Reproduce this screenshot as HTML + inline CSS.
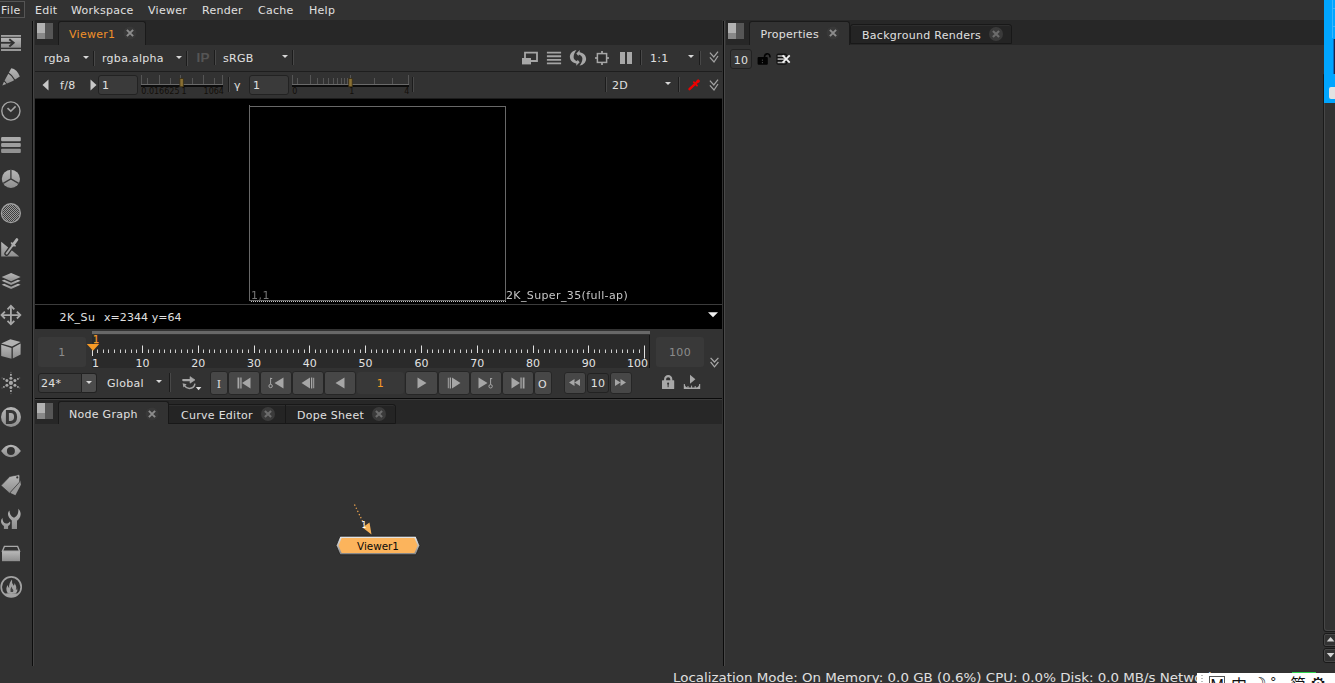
<!DOCTYPE html>
<html>
<head>
<meta charset="utf-8">
<title>Nuke</title>
<style>
html,body{margin:0;padding:0;background:#323232;}
body{width:1335px;height:683px;overflow:hidden;position:relative;font-family:"DejaVu Sans","Liberation Sans",sans-serif;font-size:11px;letter-spacing:0.28px;color:#e0e0e0;}
#app{position:absolute;left:0;top:0;width:1335px;height:683px;overflow:hidden;background:#323232;}
.abs{position:absolute;}
.t{position:absolute;white-space:nowrap;line-height:14px;color:#e0e0e0;margin-top:1px;}
.box{position:absolute;box-sizing:border-box;}
.vsep{position:absolute;width:1px;background:#1c1c1c;box-shadow:1px 0 0 #484848;}
.field{position:absolute;box-sizing:border-box;background:#3a3a3a;border:1px solid #222;border-radius:3px;}
.btn{position:absolute;box-sizing:border-box;background:#474747;border:1px solid #262626;border-radius:3px;}
.tabbar{position:absolute;background:#272727;}
.tab{position:absolute;box-sizing:border-box;background:#242424;border:1px solid #181818;border-radius:3px 3px 0 0;box-shadow:inset 0 1px 0 #2e2e2e;}
.tab.on{background:#323232;border-color:#1a1a1a;border-bottom:none;box-shadow:none;}
svg{position:absolute;overflow:visible;}
svg text{letter-spacing:0;}
.dd{position:absolute;width:0;height:0;border-left:3px solid transparent;border-right:3px solid transparent;border-top:3.5px solid #d8d8d8;}
</style>
</head>
<body>
<div id="app">

<!-- MENU BAR -->
<div class="box" style="left:0;top:0;width:1335px;height:20px;background:#323232;"></div>
<div class="box" style="left:-1px;top:1px;width:26px;height:17px;border:1px solid #555;background:#2e2e2e;"></div>
<div class="t" style="left:1px;top:3px;">File</div>
<div class="t" style="left:35px;top:3px;">Edit</div>
<div class="t" style="left:71px;top:3px;">Workspace</div>
<div class="t" style="left:148px;top:3px;">Viewer</div>
<div class="t" style="left:202px;top:3px;">Render</div>
<div class="t" style="left:258px;top:3px;">Cache</div>
<div class="t" style="left:309px;top:3px;">Help</div>

<!-- LEFT TOOLBAR -->
<div class="box" id="ltb" style="left:0;top:20px;width:32px;height:646px;background:#323232;"></div>
<div class="box" style="left:32px;top:21px;width:1px;height:645px;background:#0c0c0c;"></div><div class="box" style="left:33px;top:21px;width:1px;height:645px;background:#444;"></div>
<svg style="left:0;top:20px;" width="32" height="646" viewBox="0 20 32 646">
<defs>
<linearGradient id="ig" x1="0" y1="0" x2="0" y2="1"><stop offset="0" stop-color="#b8b8b8"/><stop offset="1" stop-color="#8e8e8e"/></linearGradient>
<pattern id="dots" width="2" height="2" patternUnits="userSpaceOnUse"><rect width="2" height="2" fill="#9a9a9a"/><rect width="1" height="1" fill="#3e3e3e"/><rect x="1" y="1" width="1" height="1" fill="#3e3e3e"/></pattern>
</defs>
<!-- 1 import -->
<g fill="url(#ig)">
<rect x="1" y="35.1" width="20" height="1.8"/>
<rect x="1" y="37.8" width="20" height="9.9"/>
<rect x="1" y="49.2" width="20" height="1.8"/>
</g>
<path d="M0.9 42.8 H12.8" stroke="#323232" stroke-width="1.8" fill="none"/>
<path d="M9.3 39.2 L13.6 42.8 L9.3 46.4" stroke="#323232" stroke-width="2" fill="none"/>
<!-- 2 pencil -->
<g fill="url(#ig)">
<path d="M2.3 85.6 L4 81.7 L6.3 84 Z"/>
<path d="M4.6 80.6 L11.3 68.2 Q17 68.8 19.8 76.6 Q13 81.6 7 83.6 Z"/>
</g>
<path d="M7.8 72.4 Q12.2 75 14.9 80.2" stroke="#323232" stroke-width="1.2" fill="none"/>
<!-- 3 clock -->
<circle cx="10.9" cy="111" r="9.1" fill="none" stroke="#a6a6a6" stroke-width="1.4"/>
<path d="M7.5 108.2 L10.8 111.2 L15.6 106.4" fill="none" stroke="#a6a6a6" stroke-width="1.6"/>
<!-- 4 bars -->
<g><rect x="1.1" y="137" width="19.7" height="4.2" rx="1" fill="#aaa"/><rect x="1.1" y="142.9" width="19.7" height="4.2" rx="1" fill="#9e9e9e"/><rect x="1.1" y="148.8" width="19.7" height="4.2" rx="1" fill="#929292"/></g>
<!-- 5 pie -->
<circle cx="10.9" cy="178.9" r="9.1" fill="url(#ig)"/>
<path d="M10.9 169.5 V178.9 L3.2 183.4 M10.9 178.9 L18.6 183.4" stroke="#3a3a3a" stroke-width="1.3" fill="none"/>
<!-- 6 dotted circle -->
<circle cx="10.9" cy="213.2" r="8.6" fill="url(#dots)"/>
<circle cx="10.9" cy="213.2" r="9.4" fill="none" stroke="#a2a2a2" stroke-width="1.4"/>
<!-- 7 triangle + dropper -->
<path d="M1.2 241.8 L1.2 256.4 L19.2 256.4 Z" fill="url(#ig)"/>
<path d="M6.6 253.6 L12.6 245.4 L17 239.4" stroke="#323232" stroke-width="4.6" stroke-linecap="round" fill="none"/>
<path d="M11 242.6 L15.6 246.2" stroke="#323232" stroke-width="3.6" stroke-linecap="round" fill="none"/>
<path d="M6.6 253.6 L12.8 245.2" stroke="#a6a6a6" stroke-width="1.9" stroke-linecap="round" fill="none"/>
<path d="M12.8 245.2 L16.9 239.6" stroke="#b0b0b0" stroke-width="2.8" stroke-linecap="round" fill="none"/>
<path d="M11.5 243 L15.1 245.8" stroke="#ababab" stroke-width="1.6" stroke-linecap="round" fill="none"/>
<!-- 8 layers -->
<g fill="url(#ig)" transform="translate(-0.4 0.5)">
<path d="M11.5 272.4 L21 276.6 L11.5 280.8 L2 276.6 Z"/>
<path d="M2 280.3 L4.6 279.2 L11.5 282.3 L18.4 279.2 L21 280.3 L11.5 284.6 Z"/>
<path d="M2 284.3 L4.6 283.2 L11.5 286.3 L18.4 283.2 L21 284.3 L11.5 288.6 Z"/>
</g>
<!-- 9 move -->
<g stroke="#a8a8a8" stroke-width="1.8" fill="none">
<path d="M10.9 306.4 V323.8 M2 315.1 H19.8"/>
<path d="M7.5 309.4 L10.9 305.9 L14.3 309.4 M7.5 320.8 L10.9 324.3 L14.3 320.8 M4.9 311.7 L1.5 315.1 L4.9 318.5 M16.9 311.7 L20.3 315.1 L16.9 318.5"/>
</g>
<!-- 10 cube -->
<g>
<path d="M1.2 343.5 L10.4 339.2 L20.6 342.1 L12 346.6 Z" fill="#b2b2b2"/>
<path d="M1.2 344.7 L11.5 348 V358.8 L1.2 356 Z" fill="url(#ig)"/>
<path d="M12.8 347.8 L20.6 343.4 V354.4 L12.8 358.6 Z" fill="url(#ig)"/>
</g>
<!-- 11 particles -->
<g fill="#a8a8a8" transform="translate(-0.1 0.9)">
<circle cx="11" cy="382" r="2.1"/>
<circle cx="11" cy="377.4" r="1.5"/><circle cx="11" cy="386.6" r="1.5"/>
<circle cx="7" cy="379.7" r="1.5"/><circle cx="15" cy="379.7" r="1.5"/>
<circle cx="7" cy="384.3" r="1.5"/><circle cx="15" cy="384.3" r="1.5"/>
<rect x="10.1" y="373" width="1.8" height="1.8"/><rect x="10.1" y="389.2" width="1.8" height="1.8"/>
<circle cx="4" cy="378" r="0.95"/><circle cx="18" cy="378" r="0.95"/>
<circle cx="4" cy="386" r="0.95"/><circle cx="18" cy="386" r="0.95"/>
<g opacity="0.45"><rect x="10.4" y="371" width="1.2" height="1"/><rect x="10.4" y="392.2" width="1.2" height="1"/>
<circle cx="2.2" cy="377" r="0.6"/><circle cx="19.8" cy="377" r="0.6"/>
<circle cx="2.2" cy="387" r="0.6"/><circle cx="19.8" cy="387" r="0.6"/></g>
</g>
<!-- 12 D -->
<circle cx="11" cy="417" r="10" fill="url(#ig)"/>
<path d="M7.4 411.6 H11 Q15.6 412 15.6 417 Q15.6 422 11 422.4 H7.4 Z" fill="none" stroke="#363636" stroke-width="3" stroke-linejoin="miter"/>
<!-- 13 eye -->
<path d="M1.1 451 Q5.5 444.8 10.9 444.8 Q16.3 444.8 20.9 451 Q16.3 457.2 10.9 457.2 Q5.5 457.2 1.1 451 Z M10.9 447 A4 4 0 1 0 10.9 455 A4 4 0 1 0 10.9 447 Z" fill="url(#ig)" fill-rule="evenodd"/>
<!-- 14 tags -->
<path d="M10 492.8 L20.3 480.5 L20.9 484.8 L15.4 495.2 Z" fill="#9a9a9a"/>
<path d="M1 485.6 L9.8 476.4 L18.6 474.8 Q19.8 474.8 19.8 476 L19.6 482 L9.6 493.2 Z" fill="url(#ig)" stroke="#323232" stroke-width="0.7"/>
<circle cx="17.3" cy="477.4" r="1.1" fill="#323232"/>
<!-- 15 wrenches -->
<g fill="url(#ig)">
<path d="M9.4 510.6 C7.2 513 7.4 517 11.8 520.4 V529 H17 V520.8 C21.4 517.4 21.8 512.4 18.4 508.8 C18.6 513 17.6 516 14 517.8 C10.6 516.4 9.6 514 9.4 510.6 Z"/>
<path d="M2.4 518 C0.2 520.6 0.8 524 3.9 526 V529 H8.1 V526 C10 524.8 10.8 523.2 10 521.4 C9.2 522.6 8 523.4 6 523.6 C3.6 523 2.4 521 2.4 518 Z"/>
</g>
<!-- 16 box -->
<g>
<path d="M4.4 546.4 H17.6 L19.6 551.2 H2.4 Z" fill="none" stroke="#a8a8a8" stroke-width="1.3"/>
<rect x="2" y="551.2" width="18" height="10" fill="url(#ig)"/>
</g>
<!-- 17 flame -->
<circle cx="11.2" cy="586.9" r="10" fill="none" stroke="#a2a2a2" stroke-width="1.7"/>
<path d="M4.2 593.8 Q11 592 18.2 593.8 A10 10 0 0 1 4.2 593.8 Z" fill="#a2a2a2"/>
<path d="M7.6 593 Q5 588.6 7.8 585 Q8 587.4 9.2 588 Q8.6 583.2 12 579.6 Q11.4 583.4 13.8 585.8 Q14.8 584.6 14.2 583 Q17.4 586.6 15.8 590 Q16.8 589.6 17.2 588.2 Q18 591 16 593.2 Z" fill="#a2a2a2"/>
<path d="M10.6 592 Q9.8 589 11.6 586.6 Q11.8 588.6 13 589.4 Q13.8 590.8 13 592 Z" fill="#323232" opacity="0.85"/>
</svg>


<!-- VIEWER PANEL -->
<div class="tabbar" style="left:35px;top:20px;width:687px;height:25px;"></div>
<!-- pane icon -->
<div class="box" style="left:37px;top:23px;width:8px;height:10px;background:#b2b2b2;"></div>
<div class="box" style="left:37px;top:33px;width:8px;height:6px;background:#888;"></div>
<div class="box" style="left:45px;top:23px;width:8px;height:16px;background:#565656;"></div>
<!-- Viewer1 tab -->
<div class="tab on" style="left:58px;top:21px;width:88px;height:24px;"></div>
<div class="t" style="left:69px;top:27px;color:#f0912a;">Viewer1</div>
<svg style="left:123px;top:26px;" width="14" height="14" viewBox="0 0 14 14"><circle cx="7" cy="7" r="6.5" fill="#383838"/><path d="M3.9 3.9 L10.1 10.1 M10.1 3.9 L3.9 10.1" stroke="#8c8c8c" stroke-width="2" fill="none"/></svg>

<!-- toolbar row 1 (y45-71) -->
<div class="t" style="left:44px;top:51px;">rgba</div>
<div class="dd" style="left:83px;top:56px;"></div>
<div class="vsep" style="left:93px;top:51px;height:15px;"></div>
<div class="t" style="left:102px;top:51px;">rgba.alpha</div>
<div class="dd" style="left:176px;top:56px;"></div>
<div class="vsep" style="left:186px;top:51px;height:15px;"></div>
<div class="t" style="left:196.5px;top:50px;color:#555;font-weight:bold;font-size:13.5px;font-family:'Liberation Sans',sans-serif;">IP</div>
<div class="vsep" style="left:214px;top:50px;height:15px;"></div>
<div class="t" style="left:223px;top:51px;">sRGB</div>
<div class="dd" style="left:281.5px;top:55px;"></div>
<div class="vsep" style="left:292px;top:50px;height:15px;"></div>

<!-- right icons row1 -->
<svg style="left:521px;top:51px;" width="18" height="14" viewBox="0 0 18 14"><path d="M4 7 V1.7 H16 V10 H10" fill="none" stroke="#a6a6a6" stroke-width="1.8"/><rect x="1" y="7" width="9" height="6.4" fill="#a8a8a8"/></svg>
<svg style="left:546px;top:51px;" width="16" height="14" viewBox="0 0 16 14"><path d="M0.9 1.6 H15.1 M0.9 5.2 H15.1 M0.9 8.9 H15.1 M0.9 12.4 H15.1" stroke="#a4a4a4" stroke-width="1.9" fill="none"/></svg>
<svg style="left:569px;top:49px;" width="18" height="18" viewBox="0 0 18 18">
<path id="rf" transform="translate(9 8.8)" d="M-1.5 -7.8 C-6 -7 -8.4 -3.5 -8.1 -0.6 C-7.8 3 -5 5 -1.6 5.6 L-1.8 7.9 L1.7 4.4 L-0.4 1.9 L-0.9 3.4 C-3 2.6 -4.6 1 -4.4 -0.9 C-4.4 -3.5 -3 -6 -1.5 -7.8 Z" fill="#a8a8a8"/>
<path transform="translate(9 8.8) rotate(180)" d="M-1.5 -7.8 C-6 -7 -8.4 -3.5 -8.1 -0.6 C-7.8 3 -5 5 -1.6 5.6 L-1.8 7.9 L1.7 4.4 L-0.4 1.9 L-0.9 3.4 C-3 2.6 -4.6 1 -4.4 -0.9 C-4.4 -3.5 -3 -6 -1.5 -7.8 Z" fill="#a8a8a8"/>
</svg>
<svg style="left:594px;top:50px;" width="16" height="16" viewBox="0 0 16 16"><rect x="3.4" y="3.6" width="9.2" height="8.8" fill="#2c2c2c" stroke="#a6a6a6" stroke-width="1.5"/><path d="M8 1 V3 M8 13 V15 M1 8 H3 M13 8 H15" stroke="#b0b0b0" stroke-width="1.6"/></svg>
<div class="box" style="left:620px;top:52px;width:5px;height:12px;background:#a8a8a8;"></div>
<div class="box" style="left:627px;top:52px;width:5px;height:12px;background:#a8a8a8;"></div>
<div class="vsep" style="left:640px;top:50px;height:15px;"></div>
<div class="t" style="left:650px;top:51px;">1:1</div>
<div class="dd" style="left:688px;top:55px;"></div>
<div class="vsep" style="left:699px;top:51px;height:14px;"></div>
<svg style="left:709px;top:51px;" width="10" height="13" viewBox="0 0 10 13"><path d="M0.9 1.6 L4.8 6 L9 0.6 M0.9 6.4 L5 11 L9 5" stroke="#a2a2a2" stroke-width="1.25" fill="none"/></svg>

<!-- row separator -->
<div class="box" style="left:35px;top:71px;width:687px;height:1px;background:#1e1e1e;"></div>

<!-- toolbar row 2 (y72-98) -->
<svg style="left:42px;top:79px;" width="7" height="12" viewBox="0 0 7 12"><path d="M6.5 0.5 V11.5 L0.5 6 Z" fill="#c8c8c8"/></svg>
<div class="t" style="left:60px;top:78px;">f/8</div>
<svg style="left:90px;top:79px;" width="7" height="12" viewBox="0 0 7 12"><path d="M0.5 0.5 V11.5 L6.5 6 Z" fill="#c8c8c8"/></svg>
<div class="field" style="left:98px;top:75px;width:40px;height:20px;"></div>
<div class="t" style="left:102px;top:78px;">1</div>
<!-- gain slider -->
<svg style="left:141px;top:74px;" width="84" height="24" viewBox="0 0 84 24">
<path d="M0.5 1 V11 M18.5 1 V11 M39.5 1 V11 M62.5 1 V11 M81.5 1 V11" stroke="#555" stroke-width="1"/>
<path d="M6.5 4 V11 M29.5 4 V11 M51.5 4 V11 M73.5 4 V11" stroke="#555" stroke-width="1"/>
<rect x="0" y="10" width="82" height="1" fill="#6a6a6a"/><rect x="0" y="11" width="82" height="2" fill="#0c0c0c"/>
<rect x="38.9" y="4.6" width="3.4" height="8.2" fill="#8a7033" stroke="#3a2f14" stroke-width="0.8"/>
<g font-family="DejaVu Sans, sans-serif" font-size="8" fill="#120f0a">
<text x="0.3" y="20">0.016625</text><text x="40.5" y="20">1</text><text x="62.6" y="20">1064</text>
</g></svg>
<div class="vsep" style="left:228px;top:77px;height:15px;"></div>
<div class="t" style="left:234px;top:78px;">γ</div>
<div class="field" style="left:249px;top:75px;width:40px;height:20px;"></div>
<div class="t" style="left:253px;top:78px;">1</div>
<!-- gamma slider -->
<svg style="left:292px;top:74px;" width="120" height="24" viewBox="0 0 120 24">
<path d="M0.5 1 V11 M18.5 1 V11 M58.5 1 V11 M116.5 1 V11" stroke="#555" stroke-width="1"/>
<path d="M5.5 4 V11 M25.5 4 V11 M31.5 4 V11 M36.5 4 V11 M41.5 4 V11 M45.5 4 V11 M49.5 4 V11 M52.5 4 V11 M55.5 4 V11 M82.5 4 V11 M100.5 4 V11" stroke="#555" stroke-width="1"/>
<rect x="0" y="10" width="117" height="1" fill="#6a6a6a"/><rect x="0" y="11" width="117" height="2" fill="#0c0c0c"/>
<rect x="56.8" y="4.6" width="3.4" height="8.2" fill="#8a7033" stroke="#3a2f14" stroke-width="0.8"/>
<g font-family="DejaVu Sans, sans-serif" font-size="8" fill="#120f0a">
<text x="0.3" y="20">0</text><text x="57.2" y="20">1</text><text x="112.2" y="20">4</text>
</g></svg>
<div class="vsep" style="left:412px;top:77px;height:15px;"></div>

<div class="vsep" style="left:605px;top:77px;height:15px;"></div>
<div class="t" style="left:612px;top:78px;">2D</div>
<div class="dd" style="left:665px;top:82px;"></div>
<div class="vsep" style="left:678px;top:77px;height:15px;"></div>
<svg style="left:688px;top:79px;" width="12" height="12" viewBox="0 0 12 12"><path d="M1.5 10.2 L10.4 1.8" stroke="#ee0000" stroke-width="2.4" stroke-linecap="round" fill="none"/><path d="M5.8 3.2 L9 6.6" stroke="#ee0000" stroke-width="1.8" stroke-linecap="round" fill="none"/><circle cx="10" cy="2.2" r="1.6" fill="#ee0000"/></svg>
<svg style="left:709px;top:79px;" width="10" height="13" viewBox="0 0 10 13"><path d="M0.9 1.6 L4.8 6 L9 0.6 M0.9 6.4 L5 11 L9 5" stroke="#a2a2a2" stroke-width="1.25" fill="none"/></svg>

<!-- viewport -->
<div class="box" style="left:35px;top:98px;width:687px;height:206px;background:#000;border-top:1px solid #1c1c1c;"></div>
<div class="box" style="left:249px;top:106px;width:257px;height:195px;border:1px solid #686868;"></div>
<div class="box" style="left:251px;top:301px;width:255px;height:1px;background:repeating-linear-gradient(90deg,#c4c4c4 0 1px,#000 1px 2px);"></div>
<div class="box" style="left:249px;top:105px;width:1px;height:2px;background:#686868;"></div>
<div class="t" style="left:250.5px;top:288px;font-size:11px;color:#747474;line-height:14px;letter-spacing:0.5px;will-change:transform;">1,1</div>
<div class="t" style="left:506px;top:288px;font-size:11px;letter-spacing:0.37px;color:#c6c6c6;will-change:transform;">2K_Super_35(full-ap)</div>
<div class="box" style="left:35px;top:304px;width:687px;height:1px;background:#3c3c3c;"></div>
<!-- info bar -->
<div class="box" style="left:35px;top:305px;width:687px;height:24px;background:#000;"></div>
<div class="t" style="left:59.5px;top:310px;letter-spacing:0.45px;">2K_Su</div><div class="t" style="left:104px;top:310px;letter-spacing:0.06px;">x=2344 y=64</div>
<svg style="left:708px;top:312px;" width="10" height="6" viewBox="0 0 10 6"><path d="M0 0.3 H10 L5 5.3 Z" fill="#f0f0f0"/></svg>
<!-- timeline -->
<div class="box" style="left:35px;top:329px;width:687px;height:39px;background:#323232;"></div>
<div class="box" style="left:92px;top:335px;width:558px;height:33px;background:#2a2a2a;border-right:1px solid #161616;"></div>
<div class="box" style="left:92px;top:331px;width:558px;height:3px;background:#686868;"></div>
<div class="box" style="left:38px;top:337px;width:48px;height:30px;background:#393939;border-radius:3px;"></div>
<div class="t" style="left:38px;top:345px;width:48px;text-align:center;color:#8c8c8c;">1</div>
<div class="box" style="left:656px;top:337px;width:48px;height:30px;background:#393939;border-radius:3px;"></div>
<div class="t" style="left:656px;top:345px;width:48px;text-align:center;color:#8c8c8c;">100</div>
<svg style="left:0;top:329px;" width="722" height="39" viewBox="0 0 722 39"><path d="M97.5 20.5 V24 M103.5 20.5 V24 M108.5 20.5 V24 M114.5 20.5 V24 M120.5 20.5 V24 M125.5 20.5 V24 M131.5 20.5 V24 M136.5 20.5 V24 M148.5 20.5 V24 M153.5 20.5 V24 M159.5 20.5 V24 M164.5 20.5 V24 M170.5 20.5 V24 M175.5 20.5 V24 M181.5 20.5 V24 M187.5 20.5 V24 M192.5 20.5 V24 M203.5 20.5 V24 M209.5 20.5 V24 M214.5 20.5 V24 M220.5 20.5 V24 M226.5 20.5 V24 M231.5 20.5 V24 M237.5 20.5 V24 M242.5 20.5 V24 M248.5 20.5 V24 M259.5 20.5 V24 M265.5 20.5 V24 M270.5 20.5 V24 M276.5 20.5 V24 M281.5 20.5 V24 M287.5 20.5 V24 M293.5 20.5 V24 M298.5 20.5 V24 M304.5 20.5 V24 M315.5 20.5 V24 M320.5 20.5 V24 M326.5 20.5 V24 M332.5 20.5 V24 M337.5 20.5 V24 M343.5 20.5 V24 M348.5 20.5 V24 M354.5 20.5 V24 M360.5 20.5 V24 M371.5 20.5 V24 M376.5 20.5 V24 M382.5 20.5 V24 M387.5 20.5 V24 M393.5 20.5 V24 M399.5 20.5 V24 M404.5 20.5 V24 M410.5 20.5 V24 M415.5 20.5 V24 M427.5 20.5 V24 M432.5 20.5 V24 M438.5 20.5 V24 M443.5 20.5 V24 M449.5 20.5 V24 M454.5 20.5 V24 M460.5 20.5 V24 M466.5 20.5 V24 M471.5 20.5 V24 M482.5 20.5 V24 M488.5 20.5 V24 M493.5 20.5 V24 M499.5 20.5 V24 M505.5 20.5 V24 M510.5 20.5 V24 M516.5 20.5 V24 M521.5 20.5 V24 M527.5 20.5 V24 M538.5 20.5 V24 M544.5 20.5 V24 M549.5 20.5 V24 M555.5 20.5 V24 M560.5 20.5 V24 M566.5 20.5 V24 M572.5 20.5 V24 M577.5 20.5 V24 M583.5 20.5 V24 M594.5 20.5 V24 M599.5 20.5 V24 M605.5 20.5 V24 M611.5 20.5 V24 M616.5 20.5 V24 M622.5 20.5 V24 M627.5 20.5 V24 M633.5 20.5 V24 M639.5 20.5 V24" stroke="#d0d0d0" stroke-width="1" fill="none"/><path d="M142.5 16.5 V24 M198.5 16.5 V24 M254.5 16.5 V24 M309.5 16.5 V24 M365.5 16.5 V24 M421.5 16.5 V24 M477.5 16.5 V24 M533.5 16.5 V24 M588.5 16.5 V24 M644.5 16.5 V29.5" stroke="#e0e0e0" stroke-width="1" fill="none"/><path d="M92.5 21 V27" stroke="#e0e0e0" stroke-width="1"/><path d="M86.8 14.9 H99.2 L93 21.7 Z" fill="#f79a26"/><g font-family="DejaVu Sans, sans-serif" font-size="11" fill="#e2e2e2" text-anchor="middle"><text x="95.5" y="38" >1</text><text x="142.4" y="38">10</text><text x="198.2" y="38">20</text><text x="254.0" y="38">30</text><text x="309.8" y="38">40</text><text x="365.6" y="38">50</text><text x="421.4" y="38">60</text><text x="477.2" y="38">70</text><text x="533.0" y="38">80</text><text x="588.8" y="38">90</text><text x="637.5" y="38">100</text></g><text x="93" y="14" font-family="DejaVu Sans, sans-serif" font-size="9.6" fill="#f79a26" stroke="#f79a26" stroke-width="0.25">1</text></svg>
<svg style="left:710px;top:357px;" width="9" height="11" viewBox="0 0 9 11"><path d="M0.6 0.8 L4.5 5 L8.4 0.8 M0.6 5 L4.5 9.8 L8.4 5" stroke="#a8a8a8" stroke-width="1.2" fill="none"/></svg>
<!-- playback controls (y368-398) -->
<div class="field" style="left:38px;top:373px;width:44px;height:20px;border-radius:3px 0 0 3px;background:#3a3a3a;"></div>
<div class="box" style="left:82px;top:373px;width:15px;height:20px;background:#4c4c4c;border:1px solid #222;border-left:none;border-radius:0 3px 3px 0;"></div>
<div class="dd" style="left:86px;top:381px;"></div>
<div class="t" style="left:41px;top:376px;">24*</div>
<div class="t" style="left:107px;top:376px;">Global</div>
<div class="dd" style="left:156px;top:380px;"></div>
<div class="vsep" style="left:169px;top:373px;height:19px;"></div>
<svg style="left:182px;top:375px;" width="20" height="17" viewBox="0 0 20 17"><path d="M1.2 5.1 H9" stroke="#a8a8a8" stroke-width="2.2" stroke-linecap="round" fill="none"/><path d="M8 1.6 L13 4.9 L8 8.2 Z" fill="#a8a8a8" stroke="#a8a8a8" stroke-width="0.6" stroke-linejoin="round"/><path d="M12.9 8.6 Q12.4 13.2 7.4 13.4 Q4 13.2 2.4 10.6" fill="none" stroke="#a4a4a4" stroke-width="1.5"/><path d="M0.6 8.2 L4.6 9.2 L1.4 12.4 Z" fill="#a4a4a4"/><path d="M13.8 12 H19.4 L16.6 15.2 Z" fill="#dcdcdc"/></svg>

<div class="btn" style="left:210px;top:371px;width:18px;height:24px;"></div>
<div class="t" style="left:210px;top:377px;width:18px;text-align:center;font-family:'DejaVu Serif','Liberation Serif',serif;font-size:11px;letter-spacing:0;">I</div>
<div class="btn" style="left:228px;top:371px;width:32px;height:24px;"></div>
<svg style="left:237px;top:377px;" width="14" height="12" viewBox="0 0 14 12"><path d="M0.5 0.5 H2.3 V11.5 H0.5 Z M3.3 0.5 H4.6 V11.5 H3.3 Z" fill="#a6a6a6"/><path d="M13.5 0.5 V11.5 L5 6 Z" fill="#a6a6a6"/></svg>
<div class="btn" style="left:260px;top:371px;width:32px;height:24px;"></div>
<svg style="left:268px;top:377px;" width="16" height="12" viewBox="0 0 16 12"><path d="M15.5 0.5 V11.5 L6.5 6 Z" fill="#a6a6a6"/><circle cx="2.6" cy="9" r="1.7" fill="none" stroke="#a6a6a6" stroke-width="1"/><path d="M2.6 7.3 V0.8 M2.6 1.5 H4.2" stroke="#a6a6a6" stroke-width="1" fill="none"/></svg>
<div class="btn" style="left:292px;top:371px;width:32px;height:24px;"></div>
<svg style="left:301px;top:377px;" width="14" height="12" viewBox="0 0 14 12"><path d="M9 0.5 V11.5 L0.5 6 Z" fill="#a6a6a6"/><path d="M10 0.5 H11.3 V11.5 H10 Z M12.2 0.8 H13.2 V11.2 H12.2 Z" fill="#a6a6a6"/></svg>
<div class="btn" style="left:324px;top:371px;width:32px;height:24px;"></div>
<svg style="left:335px;top:377px;" width="10" height="12" viewBox="0 0 10 12"><path d="M9.5 0.5 V11.5 L0.5 6 Z" fill="#a6a6a6"/></svg>
<div class="box" style="left:357px;top:372px;width:47px;height:22px;background:#383838;border-radius:3px;"></div>
<div class="t" style="left:357px;top:376px;width:47px;text-align:center;color:#f79a26;">1</div>
<div class="btn" style="left:405px;top:371px;width:33px;height:24px;"></div>
<svg style="left:417px;top:377px;" width="10" height="12" viewBox="0 0 10 12"><path d="M0.5 0.5 V11.5 L9.5 6 Z" fill="#a6a6a6"/></svg>
<div class="btn" style="left:438px;top:371px;width:32px;height:24px;"></div>
<svg style="left:447px;top:377px;" width="14" height="12" viewBox="0 0 14 12"><path d="M5 0.5 V11.5 L13.5 6 Z" fill="#a6a6a6"/><path d="M2.7 0.5 H4 V11.5 H2.7 Z M0.8 0.8 H1.8 V11.2 H0.8 Z" fill="#a6a6a6"/></svg>
<div class="btn" style="left:470px;top:371px;width:32px;height:24px;"></div>
<svg style="left:478px;top:377px;" width="16" height="12" viewBox="0 0 16 12"><path d="M0.5 0.5 V11.5 L9.5 6 Z" fill="#a6a6a6"/><circle cx="12.6" cy="9.3" r="1.7" fill="none" stroke="#a6a6a6" stroke-width="1"/><path d="M12.6 7.6 V1 M12.6 1.6 H14.2" stroke="#a6a6a6" stroke-width="1" fill="none"/></svg>
<div class="btn" style="left:502px;top:371px;width:32px;height:24px;"></div>
<svg style="left:511px;top:377px;" width="14" height="12" viewBox="0 0 14 12"><path d="M0.5 0.5 V11.5 L9 6 Z" fill="#a6a6a6"/><path d="M9.4 0.5 H10.7 V11.5 H9.4 Z M11.7 0.5 H13.5 V11.5 H11.7 Z" fill="#a6a6a6"/></svg>
<div class="btn" style="left:534px;top:371px;width:18px;height:24px;"></div>
<div class="t" style="left:534px;top:377px;width:17px;text-align:center;font-size:11px;">O</div>
<div class="btn" style="left:564px;top:372px;width:22px;height:22px;"></div>
<svg style="left:569px;top:379px;" width="11" height="7" viewBox="0 0 11 7"><path d="M5.5 0 V7 L0 3.5 Z M11 0 V7 L5.5 3.5 Z" fill="#a6a6a6"/></svg>
<div class="field" style="left:587px;top:373px;width:22px;height:20px;background:#343434;"></div>
<div class="t" style="left:587px;top:376px;width:22px;text-align:center;">10</div>
<div class="btn" style="left:610px;top:372px;width:22px;height:22px;"></div>
<svg style="left:615px;top:379px;" width="11" height="7" viewBox="0 0 11 7"><path d="M0 0 V7 L5.5 3.5 Z M5.5 0 V7 L11 3.5 Z" fill="#a6a6a6"/></svg>
<!-- lock -->
<svg style="left:662px;top:375px;" width="13" height="14" viewBox="0 0 13 14"><path d="M3.1 6 V4.2 A3.1 3.1 0 0 1 9.3 4.2 V6" fill="none" stroke="#a8a8a8" stroke-width="2.1"/><rect x="0" y="5.2" width="12.2" height="8.8" rx="0.6" fill="#a8a8a8"/><circle cx="6.1" cy="8.6" r="1.05" fill="#323232"/><rect x="5.6" y="9" width="1" height="3.2" fill="#323232"/></svg>
<!-- ruler play -->
<svg style="left:683px;top:375px;" width="18" height="14" viewBox="0 0 18 14"><path d="M7 -0.2 V8.8 L12.4 4.3 Z" fill="#a8a8a8"/><path d="M0.8 9 H1.8 Q2 12.2 5 12.6 H13 Q16 12.2 16.2 9 H17.2 V14 H0.8 Z" fill="#aaa"/><path d="M5 11 V13 M8.6 10.6 V13 M12.2 11 V13" stroke="#aaa" stroke-width="1" fill="none"/></svg>

<!-- panel bottom line -->
<div class="box" style="left:35px;top:398px;width:687px;height:1px;background:#0a0a0a;"></div><div class="box" style="left:35px;top:399px;width:687px;height:1px;background:#3c3c3c;"></div>

<!-- lower tabs -->
<div class="tabbar" style="left:35px;top:400px;width:687px;height:24px;"></div>
<div class="box" style="left:37px;top:403px;width:8px;height:10px;background:#b2b2b2;"></div>
<div class="box" style="left:37px;top:413px;width:8px;height:6px;background:#888;"></div>
<div class="box" style="left:45px;top:403px;width:8px;height:16px;background:#565656;"></div>
<div class="tab on" style="left:58px;top:401px;width:111px;height:24px;"></div>
<div class="t" style="left:69px;top:407px;">Node Graph</div>
<svg style="left:145px;top:407px;" width="14" height="14" viewBox="0 0 14 14"><circle cx="7" cy="7" r="6.5" fill="#383838"/><path d="M3.9 3.9 L10.1 10.1 M10.1 3.9 L3.9 10.1" stroke="#8c8c8c" stroke-width="2" fill="none"/></svg>
<div class="tab" style="left:168px;top:404px;width:118px;height:20px;border-radius:0 0 0 0;"></div>
<div class="t" style="left:181px;top:408px;">Curve Editor</div>
<svg style="left:261px;top:407px;" width="14" height="14" viewBox="0 0 14 14"><circle cx="7" cy="7" r="7" fill="#3a3a3a"/><path d="M3.9 3.9 L10.1 10.1 M10.1 3.9 L3.9 10.1" stroke="#6c6c6c" stroke-width="2.1" fill="none"/></svg>
<div class="tab" style="left:285px;top:404px;width:111px;height:20px;border-radius:0 3px 0 0;"></div>
<div class="t" style="left:297px;top:408px;">Dope Sheet</div>
<svg style="left:372px;top:407px;" width="14" height="14" viewBox="0 0 14 14"><circle cx="7" cy="7" r="7" fill="#3a3a3a"/><path d="M3.9 3.9 L10.1 10.1 M10.1 3.9 L3.9 10.1" stroke="#6c6c6c" stroke-width="2.1" fill="none"/></svg>

<!-- node graph -->
<div class="box" style="left:35px;top:424px;width:687px;height:242px;background:#323232;"></div>
<svg style="left:330px;top:500px;" width="100" height="60" viewBox="0 0 100 60">
<defs><linearGradient id="ng" x1="0" y1="0" x2="0" y2="1"><stop offset="0" stop-color="#e8e8e8"/><stop offset="0.5" stop-color="#bdbdbd"/><stop offset="1" stop-color="#808080"/></linearGradient></defs>
<path d="M24.5 4.5 L34.8 26" stroke="#f7a94f" stroke-width="1.2" stroke-dasharray="1.3 2.2" fill="none"/>
<path d="M41.5 34.5 L32.5 27.5 L39.5 22.5 Z" fill="#f7b259"/>
<path d="M10 36.2 H86 L89.8 45.5 L86 54.8 H10 L6.2 45.5 Z" fill="url(#ng)" stroke="#1e1e1e" stroke-width="0.8"/>
<path d="M11.6 38 H84.4 L87.6 45.5 L84.4 53 H11.6 L8.6 45.5 Z" fill="#fcb45c"/>
<text x="48" y="49.8" font-family="DejaVu Sans, sans-serif" font-size="10.4" fill="#0a0a0a" text-anchor="middle">Viewer1</text>
<text x="31.5" y="27.5" font-family="DejaVu Sans, sans-serif" font-size="8" fill="#fff">1</text>
</svg>


<!-- panel divider -->
<div class="box" style="left:723px;top:21px;width:1px;height:645px;background:#0a0a0a;"></div><div class="box" style="left:724px;top:21px;width:1px;height:645px;background:#484848;"></div>

<!-- PROPERTIES PANEL -->
<div class="tabbar" style="left:726px;top:20px;width:598px;height:25px;"></div>
<!-- pane icon -->
<div class="box" style="left:728px;top:23px;width:8px;height:10px;background:#b2b2b2;"></div>
<div class="box" style="left:728px;top:33px;width:8px;height:6px;background:#888;"></div>
<div class="box" style="left:736px;top:23px;width:8px;height:16px;background:#565656;"></div>
<div class="tab on" style="left:749px;top:21px;width:101px;height:24px;"></div>
<div class="t" style="left:760.5px;top:27px;">Properties</div>
<svg style="left:826px;top:26px;" width="14" height="14" viewBox="0 0 14 14"><circle cx="7" cy="7" r="6.5" fill="#383838"/><path d="M3.9 3.9 L10.1 10.1 M10.1 3.9 L3.9 10.1" stroke="#8c8c8c" stroke-width="2" fill="none"/></svg>
<div class="tab" style="left:850px;top:24px;width:162px;height:20px;"></div>
<div class="t" style="left:862px;top:28px;">Background Renders</div>
<svg style="left:989px;top:27px;" width="14" height="14" viewBox="0 0 14 14"><circle cx="7" cy="7" r="7" fill="#3a3a3a"/><path d="M3.9 3.9 L10.1 10.1 M10.1 3.9 L3.9 10.1" stroke="#6c6c6c" stroke-width="2.1" fill="none"/></svg>
<!-- panel body -->
<div class="box" style="left:726px;top:45px;width:598px;height:621px;background:#323232;"></div>
<div class="field" style="left:730px;top:49px;width:22px;height:20px;background:#363636;"></div>
<div class="t" style="left:730px;top:53px;width:22px;text-align:center;">10</div>
<!-- open lock -->
<svg style="left:757px;top:52px;" width="14" height="13" viewBox="0 0 14 13"><path d="M7.6 5.6 V4 A2.7 2.7 0 0 1 12.7 3.4 L13 4.8" fill="none" stroke="#030303" stroke-width="1.6" stroke-linecap="round"/><rect x="0.6" y="5.1" width="10.2" height="7.6" rx="1" fill="#030303"/><rect x="4.9" y="7.6" width="0.9" height="1.2" fill="#555"/><rect x="4.9" y="10" width="0.9" height="1.2" fill="#555"/></svg>
<!-- clear icon -->
<svg style="left:776px;top:53px;" width="15" height="12" viewBox="0 0 15 12"><rect x="0.4" y="0.4" width="10.6" height="11.3" rx="1.8" fill="#121212"/><path d="M1.6 3 H9.4 M1.6 6.2 H9.4 M1.6 9.5 H9.4" stroke="#a6a6a6" stroke-width="1.7"/><path d="M6.6 2.3 L13.7 9.7 M13.7 2.3 L6.6 9.7" stroke="#f2f2f2" stroke-width="1.8" fill="none"/></svg>

<!-- scrollbar -->
<div class="box" style="left:1323px;top:74px;width:14px;height:558px;background:#323232;border:1px solid #1a1a1a;border-radius:0 0 0 3px;"></div>
<div class="box" style="left:1324px;top:75px;width:14px;height:556px;border:1px solid #474747;border-radius:0 0 0 3px;"></div>
<div class="box" style="left:1323px;top:633px;width:14px;height:14px;background:#323232;border:1px solid #1a1a1a;border-radius:3px 0 0 3px;"></div>
<div class="box" style="left:1324px;top:634px;width:14px;height:12px;border:1px solid #474747;border-radius:2px 0 0 2px;"></div>
<svg style="left:1327px;top:637px;" width="8" height="5" viewBox="0 0 8 5"><path d="M-0.2 4.4 L3.6 0 L7.4 4.4 Z" fill="#d2d2d2"/></svg>
<div class="box" style="left:1323px;top:648px;width:14px;height:15px;background:#323232;border:1px solid #1a1a1a;border-radius:3px 0 0 3px;"></div>
<div class="box" style="left:1324px;top:649px;width:14px;height:13px;border:1px solid #474747;border-radius:2px 0 0 2px;"></div>
<svg style="left:1327px;top:653px;" width="8" height="5" viewBox="0 0 8 5"><path d="M-0.2 0 L3.6 4.4 L7.4 0 Z" fill="#d2d2d2"/></svg>

<!-- blue overlay strip -->
<div class="box" style="left:1324px;top:0;width:11px;height:103px;background:#00a5ff;"></div>
<div class="box" style="left:1332px;top:0;width:1px;height:38px;background:#36b6ff;"></div>
<div class="box" style="left:1332px;top:8px;width:3px;height:1px;background:#36b6ff;"></div>
<div class="box" style="left:1332px;top:26px;width:3px;height:1px;background:#36b6ff;"></div>
<div class="box" style="left:1334px;top:39px;width:1px;height:35px;background:#1c2448;"></div><div class="box" style="left:1333px;top:39px;width:1px;height:35px;background:#0d6bc0;"></div>
<div class="box" style="left:1329px;top:87px;width:8px;height:12px;background:#e2e2e2;border-radius:2px;"></div>


<!-- STATUS BAR -->
<div class="t" style="left:673px;top:666.6px;font-size:13.5px;letter-spacing:0;line-height:18px;transform-origin:0 13.67px;transform:scale(0.993,0.86);">Localization Mode: On Memory: 0.0 GB (0.6%) CPU: 0.0% Disk: 0.0 MB/s Network</div>
<div class="box" style="left:1292px;top:672px;width:24px;height:1px;background:#2bd14a;"></div>
<div class="box" style="left:1197px;top:673px;width:138px;height:10px;background:#fff;overflow:hidden;">
<div class="abs" style="left:4px;top:2px;width:2px;height:8px;background:repeating-linear-gradient(#bbb 0 1px,#fff 1px 3px);"></div>
<div class="box" style="left:12px;top:3px;width:16px;height:16px;border:1px solid #555;"></div>
<div class="t" style="letter-spacing:0;left:13.5px;top:3.3px;font-size:16px;color:#111;line-height:18px;font-family:'Liberation Sans',sans-serif;">M</div>
<div class="t" style="letter-spacing:0;left:34px;top:3.4px;font-size:16px;color:#111;line-height:18px;font-family:'Liberation Sans','Noto Sans CJK SC',sans-serif;">中</div>
<div class="t" style="letter-spacing:0;left:56px;top:1.4px;font-size:15px;color:#111;line-height:16px;font-family:'DejaVu Sans',sans-serif;">☽</div>
<div class="t" style="letter-spacing:0;left:73px;top:0.3px;font-size:13px;color:#111;line-height:16px;font-family:'DejaVu Sans',sans-serif;">°,</div>
<div class="t" style="letter-spacing:0;left:93px;top:2.1px;font-size:16px;color:#111;line-height:18px;font-family:'Liberation Sans','Noto Sans CJK SC',sans-serif;">简</div>
<div class="t" style="letter-spacing:0;left:113px;top:1.2px;font-size:18px;color:#111;line-height:18px;font-family:'DejaVu Sans',sans-serif;">⚙</div>
</div>


</div>
</body>
</html>
